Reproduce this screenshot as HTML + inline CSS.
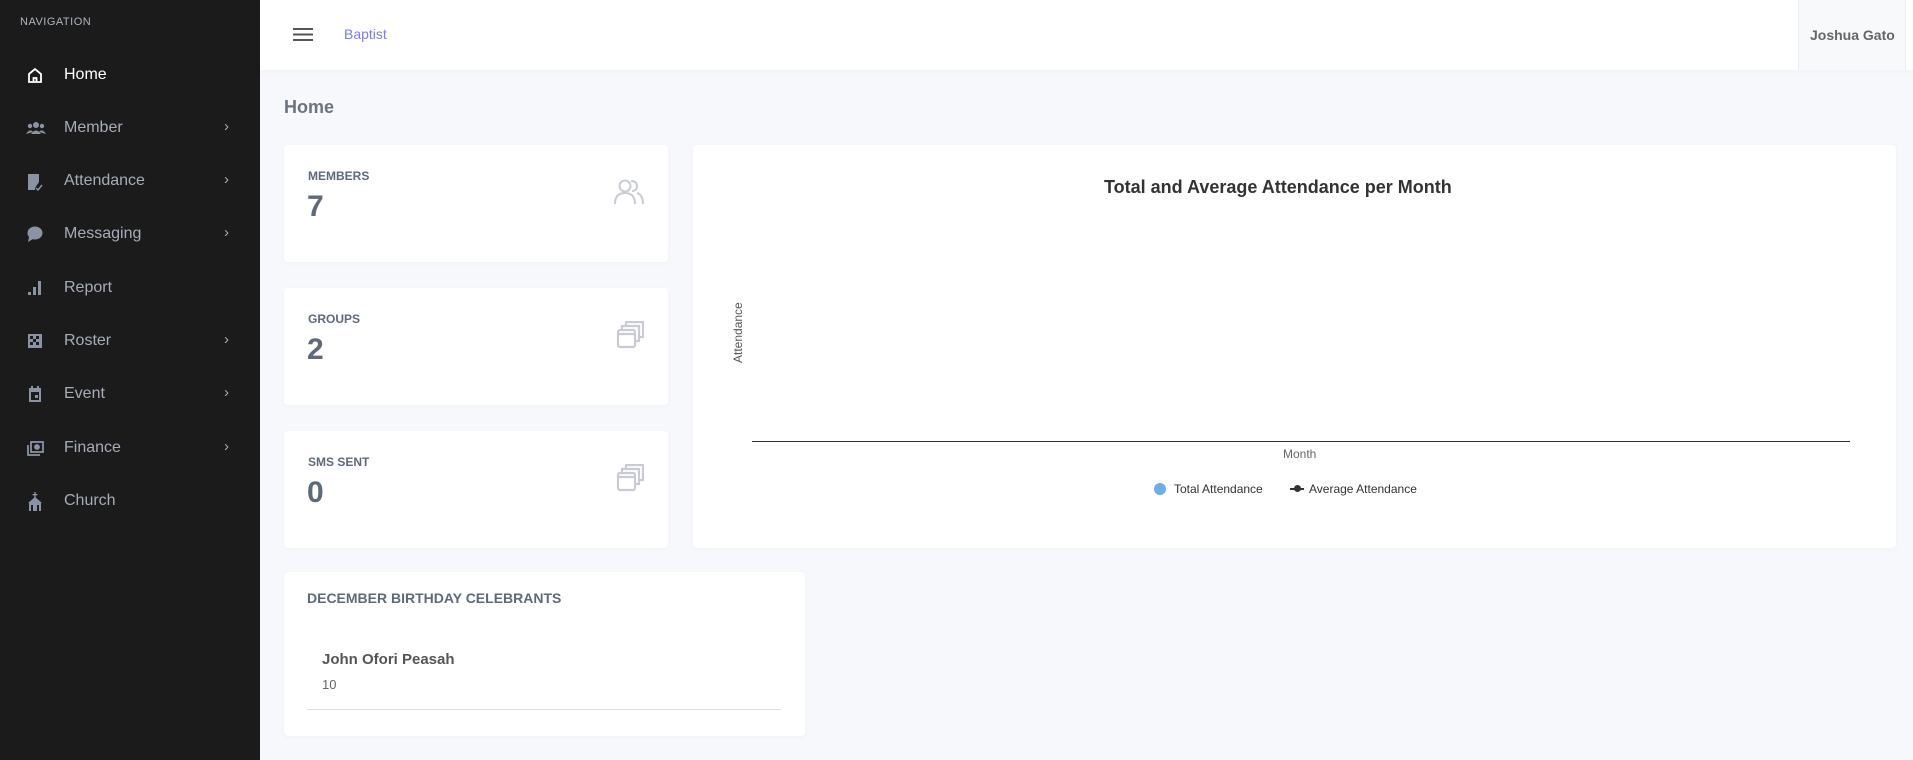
<!DOCTYPE html>
<html><head><meta charset="utf-8"><style>
*{box-sizing:border-box;margin:0;padding:0}
body{width:1913px;height:760px;overflow:hidden;background:#f7f8fc;font-family:"Liberation Sans",sans-serif;position:relative}
.sb{position:absolute;left:0;top:0;width:260px;height:760px;background:#1b1b1b}
.nav{position:absolute;left:20px;top:16px;font-size:11px;color:#aeb4bf;letter-spacing:.5px}
.it{position:absolute;left:0;width:260px;height:30px;color:#a6acb8;font-size:16px}
.it svg{position:absolute;left:26px;top:6px}
.it span{position:absolute;left:64px;top:6px}
.it .ch{position:absolute;left:224px;top:5px;font-size:15px;color:#a6acb8;font-weight:normal}
.hd{position:absolute;left:260px;top:0;width:1653px;height:70px;background:#fff;box-shadow:0 2px 8px rgba(0,0,0,.03)}
.card{position:absolute;background:#fff;border-radius:4px;box-shadow:0 1px 6px rgba(0,0,0,.03)}
.lbl{position:absolute;left:24px;top:24px;font-size:12px;font-weight:bold;color:#5e6a7a}
.num{position:absolute;left:23px;top:45px;font-size:30px;font-weight:bold;color:#5e6a7a}
.ic{position:absolute;right:24px;top:32px}
</style></head><body>
<div class="sb">
<div class="nav">NAVIGATION</div>
<div class="it" style="top:60px;color:#fff"><svg width="18" height="18" viewBox="0 0 18 18" fill="none" stroke="#fff" stroke-width="1.8"><path d="M3 8 L9 3 L15 8 V16 H3 Z M7.5 16 V12 H10.5 V16"/></svg><span>Home</span></div>
<div class="it" style="top:113px"><svg width="20" height="18" viewBox="0 0 20 18" fill="#8a93a3"><circle cx="10" cy="6" r="3"/><circle cx="4" cy="7" r="2.2"/><circle cx="16" cy="7" r="2.2"/><path d="M5 15 Q10 8 15 15Z M0 15 Q4 9 7 13Z M20 15 Q16 9 13 13Z"/></svg><span>Member</span><b class="ch">›</b></div>
<div class="it" style="top:166px"><svg width="18" height="20" viewBox="0 0 18 20" fill="#8a93a3"><path d="M2 2 H13 V10 L9 16 V18 H2Z"/><path d="M10 16 L12 18 L16 13" stroke="#8a93a3" stroke-width="1.5" fill="none"/></svg><span>Attendance</span><b class="ch">›</b></div>
<div class="it" style="top:219px"><svg width="18" height="18" viewBox="0 0 18 18" fill="#8a93a3"><ellipse cx="9" cy="8" rx="7.5" ry="6.5"/><path d="M3 12 L2 17 L7 14Z"/></svg><span>Messaging</span><b class="ch">›</b></div>
<div class="it" style="top:273px"><svg width="18" height="18" viewBox="0 0 18 18" fill="#8a93a3"><rect x="2" y="13" width="3" height="3"/><rect x="7" y="8" width="3" height="8"/><rect x="12" y="2" width="3" height="14"/></svg><span>Report</span></div>
<div class="it" style="top:326px"><svg width="18" height="18" viewBox="0 0 18 18" fill="#8a93a3"><rect x="2" y="2" width="14" height="14"/><g fill="#1b1b1b"><rect x="4" y="4" width="3" height="3"/><rect x="10" y="4" width="3" height="3"/><rect x="7" y="7" width="3" height="3"/><rect x="4" y="10" width="3" height="3"/><rect x="10" y="10" width="3" height="3"/></g></svg><span>Roster</span><b class="ch">›</b></div>
<div class="it" style="top:379px"><svg width="18" height="18" viewBox="0 0 18 18" fill="#8a93a3"><rect x="3" y="3" width="12" height="14"/><rect x="5" y="1" width="2" height="3"/><rect x="11" y="1" width="2" height="3"/><rect x="5" y="7" width="8" height="8" fill="#1b1b1b"/><rect x="9" y="10" width="3" height="3"/></svg><span>Event</span><b class="ch">›</b></div>
<div class="it" style="top:433px"><svg width="18" height="18" viewBox="0 0 18 18" fill="none" stroke="#8a93a3" stroke-width="1.8"><rect x="5" y="3" width="12" height="10"/><path d="M2 6 V16 H14"/><circle cx="11" cy="8" r="2" fill="#8a93a3"/></svg><span>Finance</span><b class="ch">›</b></div>
<div class="it" style="top:486px"><svg width="18" height="20" viewBox="0 0 18 20" fill="#8a93a3"><rect x="8.3" y="0" width="1.4" height="6"/><rect x="6.5" y="2" width="5" height="1.3"/><path d="M9 5 L16 11 H2Z"/><rect x="3" y="11" width="12" height="8"/><rect x="5" y="13" width="2" height="6" fill="#1b1b1b"/><rect x="11" y="13" width="2" height="6" fill="#1b1b1b"/></svg><span>Church</span></div>
</div>
<div class="hd">
<svg style="position:absolute;left:33px;top:27px" width="20" height="15" viewBox="0 0 20 15" stroke="#555" stroke-width="2"><path d="M0 2H20M0 7.5H20M0 13H20"/></svg>
<div style="position:absolute;left:84px;top:26px;font-size:14px;color:#7a7cf3">Baptist</div>
<div style="position:absolute;left:1538px;top:0;width:108px;height:70px;background:#f8f9fb;border-left:1px solid #eceef2;border-right:1px solid #eceef2;font-size:14px;font-weight:bold;color:#666;padding:27px 0 0 11px">Joshua Gato</div>
</div>
<div style="position:absolute;left:284px;top:97px;font-size:18px;font-weight:bold;color:#6b7380">Home</div>
<div class="card" style="left:284px;top:145px;width:384px;height:117px"><div class="lbl">MEMBERS</div><div class="num">7</div>
<svg class="ic" style="top:34px" width="30" height="26" viewBox="0 0 30 26" fill="none" stroke="#c8ccd2" stroke-width="2"><circle cx="11" cy="7" r="5.5"/><path d="M1 25 Q1 14 11 14 Q21 14 21 25"/><path d="M17 2 Q23 2 23 7 Q23 12 18 12 M23 14 Q29 16 29 25"/></svg></div>
<div class="card" style="left:284px;top:288px;width:384px;height:117px"><div class="lbl">GROUPS</div><div class="num">2</div>
<svg class="ic" style="top:33px" width="28" height="28" viewBox="0 0 28 28" fill="none" stroke="#c8ccd2" stroke-width="2.2"><rect x="2" y="9" width="17" height="17" rx="2"/><path d="M6 9 V5 H23 V20 H19 M10 5 V1 H27 V16 H23"/><path d="M2 13 H19"/></svg></div>
<div class="card" style="left:284px;top:431px;width:384px;height:117px"><div class="lbl">SMS SENT</div><div class="num">0</div>
<svg class="ic" style="top:33px" width="28" height="28" viewBox="0 0 28 28" fill="none" stroke="#c8ccd2" stroke-width="2.2"><rect x="2" y="9" width="17" height="17" rx="2"/><path d="M6 9 V5 H23 V20 H19 M10 5 V1 H27 V16 H23"/><path d="M2 13 H19"/></svg></div>
<div class="card" style="left:693px;top:145px;width:1203px;height:403px">
<div style="position:absolute;left:411px;top:32px;font-size:18px;font-weight:bold;color:#333">Total and Average Attendance per Month</div>
<div style="position:absolute;left:38px;top:218px;transform:rotate(-90deg);transform-origin:left top;font-size:12px;color:#555">Attendance</div>
<div style="position:absolute;left:59px;top:296px;width:1098px;height:1px;background:#333"></div>
<div style="position:absolute;left:590px;top:302px;font-size:12px;color:#666">Month</div>
<div style="position:absolute;left:461px;top:338px;width:12px;height:12px;border-radius:50%;background:#6aaeea"></div>
<div style="position:absolute;left:481px;top:337px;font-size:12px;color:#333">Total Attendance</div>
<div style="position:absolute;left:597px;top:343px;width:14px;height:2px;background:#333"></div>
<div style="position:absolute;left:601px;top:340px;width:7px;height:7px;border-radius:50%;background:#333"></div>
<div style="position:absolute;left:616px;top:337px;font-size:12px;color:#333">Average Attendance</div>
</div>
<div class="card" style="left:284px;top:572px;width:521px;height:164px">
<div style="position:absolute;left:23px;top:18px;font-size:14px;font-weight:bold;color:#5e6a7a">DECEMBER BIRTHDAY CELEBRANTS</div>
<div style="position:absolute;left:38px;top:79px;font-size:15px;font-weight:bold;color:#555">John Ofori Peasah</div>
<div style="position:absolute;left:38px;top:105px;font-size:13px;color:#666">10</div>
<div style="position:absolute;left:23px;top:137px;width:474px;height:1px;background:#ddd"></div>
</div>
</body></html>
